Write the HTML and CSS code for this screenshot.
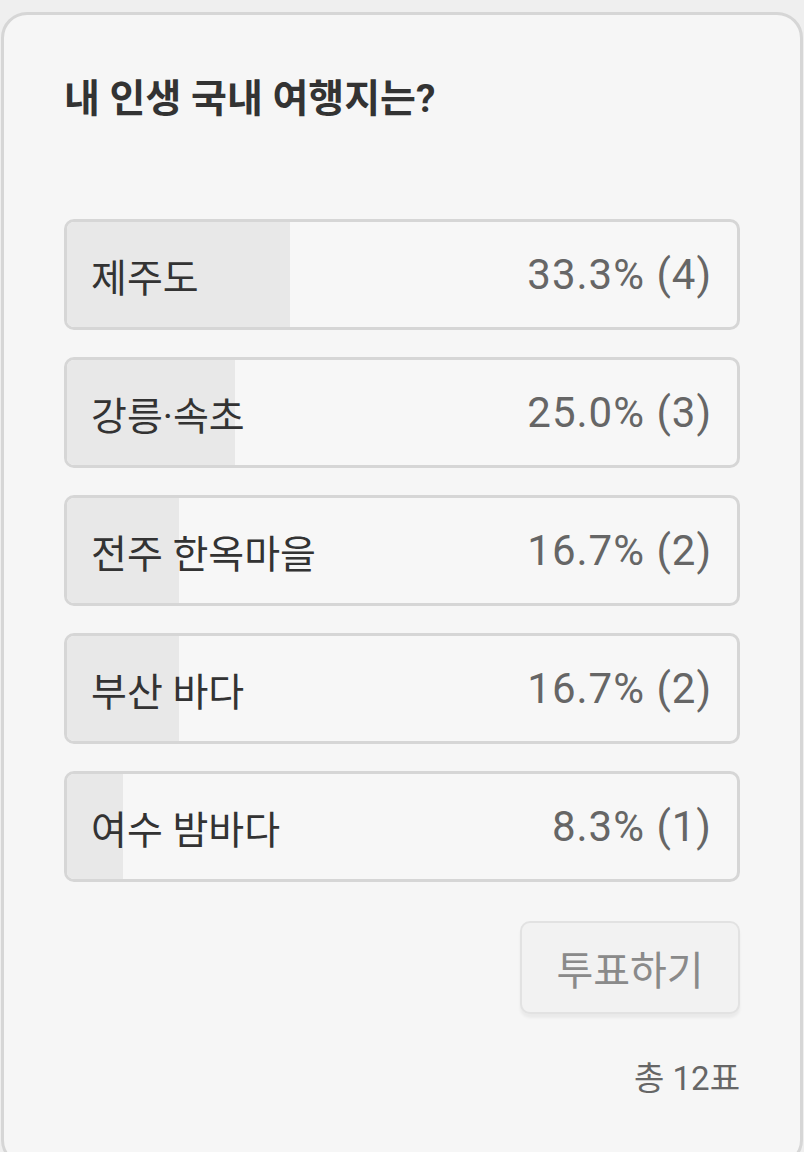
FILE: index.html
```html
<!DOCTYPE html>
<html lang="ko">
<head>
    <meta charset="UTF-8">
    <meta name="viewport" content="width=device-width, initial-scale=1.0">
    <title>투표</title>
    <link rel="stylesheet" href="styles.css">
</head>
<body>
    <div class="poll-card">
        <h1 class="poll-title">내 인생 국내 여행지는?</h1>
        <div class="poll-options">
            <div class="poll-option">
                <div class="poll-fill" style="width: 33.3%"></div>
                <span class="option-label">제주도</span>
                <span class="option-result">33.3% (4)</span>
            </div>
            <div class="poll-option">
                <div class="poll-fill" style="width: 25%"></div>
                <span class="option-label">강릉·속초</span>
                <span class="option-result">25.0% (3)</span>
            </div>
            <div class="poll-option">
                <div class="poll-fill" style="width: 16.7%"></div>
                <span class="option-label">전주 한옥마을</span>
                <span class="option-result">16.7% (2)</span>
            </div>
            <div class="poll-option">
                <div class="poll-fill" style="width: 16.7%"></div>
                <span class="option-label">부산 바다</span>
                <span class="option-result">16.7% (2)</span>
            </div>
            <div class="poll-option">
                <div class="poll-fill" style="width: 8.3%"></div>
                <span class="option-label">여수 밤바다</span>
                <span class="option-result">8.3% (1)</span>
            </div>
        </div>
        <div class="poll-actions">
            <button class="vote-btn" disabled>투표하기</button>
        </div>
        <div class="poll-total">총 12표</div>
    </div>
</body>
</html>
```

FILE: styles.css
```css
body {
    margin: 0;
    background-color: #efefef;
    font-family: Roboto, "Noto Sans CJK KR", sans-serif;
}
.poll-card {
    box-sizing: border-box;
    height: 1154px;
    margin: 12px 1px 0;
    padding: 60px 60px 0;
    background: #f6f6f6;
    border: 3px solid #d6d6d6;
    border-radius: 26px;
}
.poll-title {
    margin: 0 0 96px;
    font-size: 39px;
    line-height: 48px;
    font-weight: bold;
    color: #333;
}
.poll-options {
    display: flex;
    flex-direction: column;
    gap: 27px;
}
.poll-option {
    position: relative;
    display: flex;
    justify-content: space-between;
    align-items: center;
    height: 105px;
    padding: 0 25px 0 24px;
    background: #f7f7f7;
    border: 3px solid #d6d6d6;
    border-radius: 10px;
    overflow: hidden;
}
.poll-fill {
    position: absolute;
    left: 0;
    top: 0;
    bottom: 0;
    background: #e8e8e8;
}
.option-label {
    position: relative;
    font-size: 39px;
    color: #333;
}
.option-result {
    position: relative;
    font-size: 42px;
    letter-spacing: 1px;
    color: #666;
}
.poll-actions {
    display: flex;
    justify-content: flex-end;
    margin-top: 39px;
}
.vote-btn {
    width: 220px;
    height: 93px;
    font-family: Roboto, "Noto Sans CJK KR", sans-serif;
    font-size: 40px;
    color: #8a8a8a;
    background: #f2f2f2;
    border: 2px solid #e2e2e2;
    border-radius: 10px;
    box-shadow: 0 4px 3px rgba(0, 0, 0, 0.05);
}
.poll-total {
    margin-top: 38px;
    text-align: right;
    font-size: 33px;
    color: #666;
}
```
